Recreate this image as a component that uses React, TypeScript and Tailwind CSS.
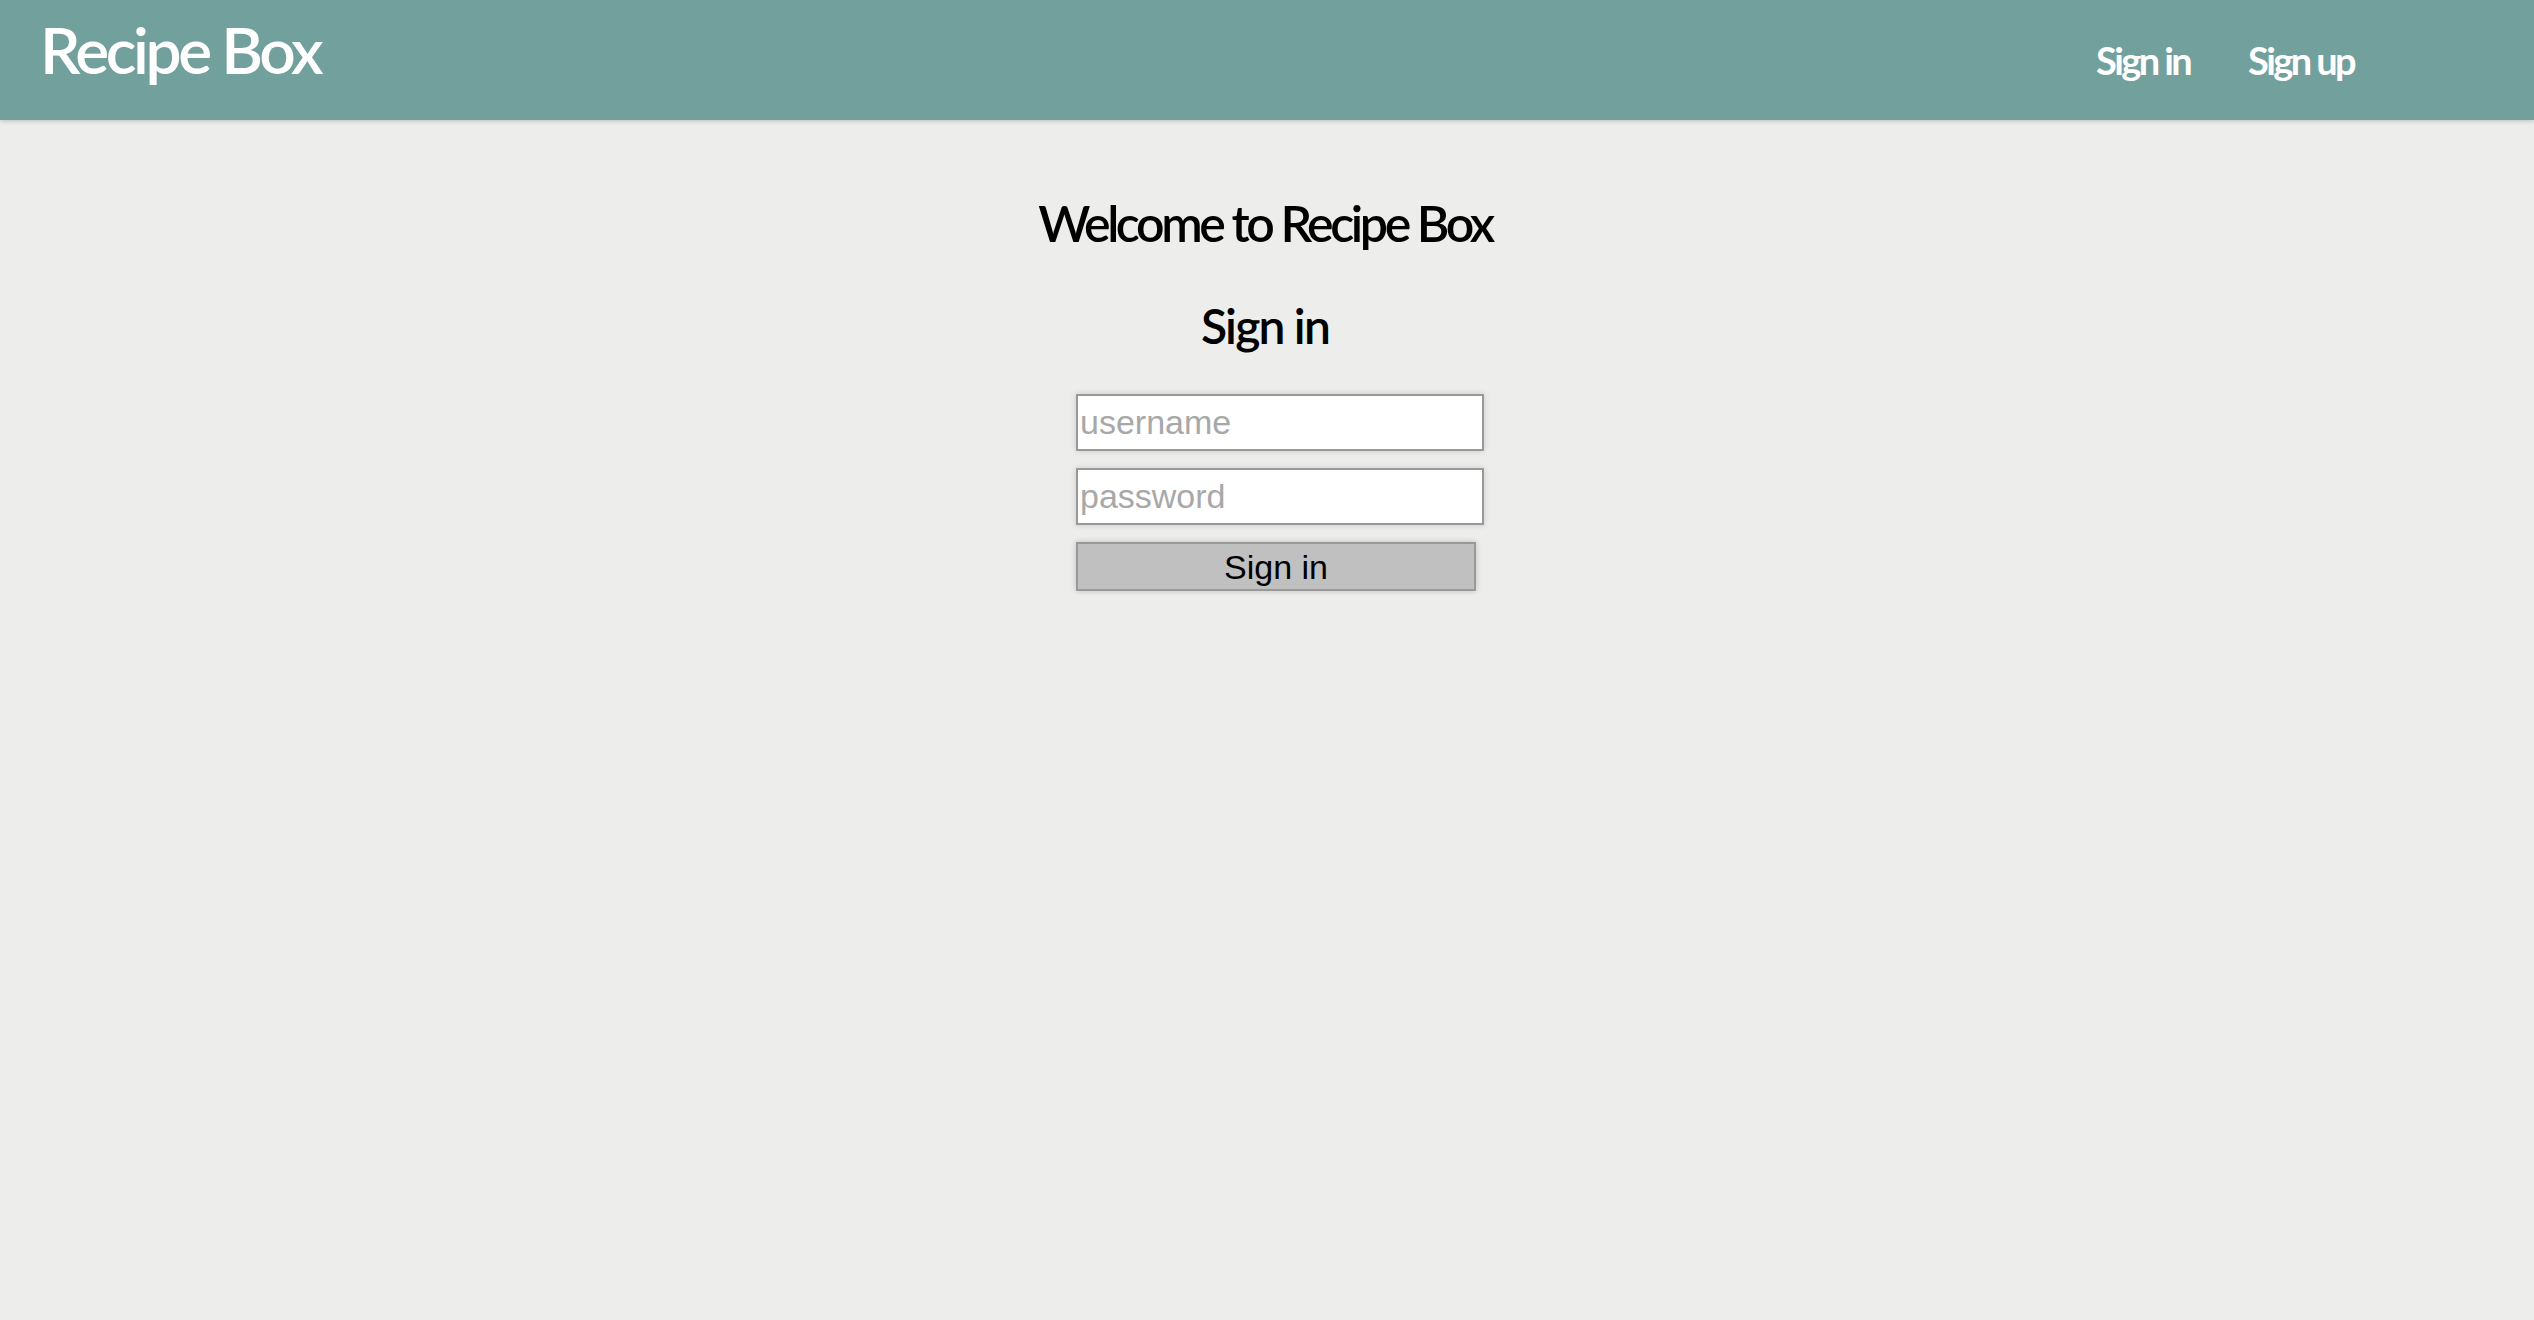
import React from "react";

export default function App() {
  return (
    <div className="min-h-[1320px] w-full bg-[#ededeb]" style={{ fontFamily: "Lato, 'Open Sans', sans-serif" }}>
      <header className="flex h-[120px] items-start justify-between bg-[#72a09c] shadow-[0_2px_4px_rgba(0,0,0,0.15)]">
        <div className="pl-[40px] pt-[18px] text-[64px] font-semibold leading-none tracking-[-3.4px] text-white">Recipe Box</div>
        <nav className="flex gap-[58px] pr-[180px] pt-[41px] text-[38px] font-bold leading-none tracking-[-2.6px] text-white">
          <a>Sign in</a>
          <a>Sign up</a>
        </nav>
      </header>
      <main className="flex flex-col items-center">
        <h1 className="mt-[78px] pr-[4px] text-[50px] font-semibold leading-none tracking-[-3.4px] text-black">Welcome to Recipe Box</h1>
        <h2 className="mt-[54px] pr-[4px] text-[48px] font-semibold leading-none tracking-[-1.8px] text-black">Sign in</h2>
        <form className="mt-[44px] flex w-[408px] translate-x-[13px] flex-col gap-[17px]">
          <input
            placeholder="username"
            className="h-[57px] w-[408px] border-2 border-[#999] bg-white px-[2px] text-[34px] text-black shadow-[0_0_6px_rgba(0,0,0,0.15)] outline-none placeholder:text-[#a8a8a8]"
            style={{ fontFamily: "'Liberation Sans', Arial, sans-serif" }}
          />
          <input
            placeholder="password"
            type="password"
            className="h-[57px] w-[408px] border-2 border-[#999] bg-white px-[2px] text-[34px] text-black shadow-[0_0_6px_rgba(0,0,0,0.15)] outline-none placeholder:text-[#a8a8a8]"
            style={{ fontFamily: "'Liberation Sans', Arial, sans-serif" }}
          />
          <button
            type="button"
            className="h-[49px] w-[400px] border-2 border-[#999] bg-[#c0c0c0] text-[34px] leading-none text-black shadow-[0_0_6px_rgba(0,0,0,0.2)]"
            style={{ fontFamily: "'Liberation Sans', Arial, sans-serif" }}
          >
            Sign in
          </button>
        </form>
      </main>
    </div>
  );
}
